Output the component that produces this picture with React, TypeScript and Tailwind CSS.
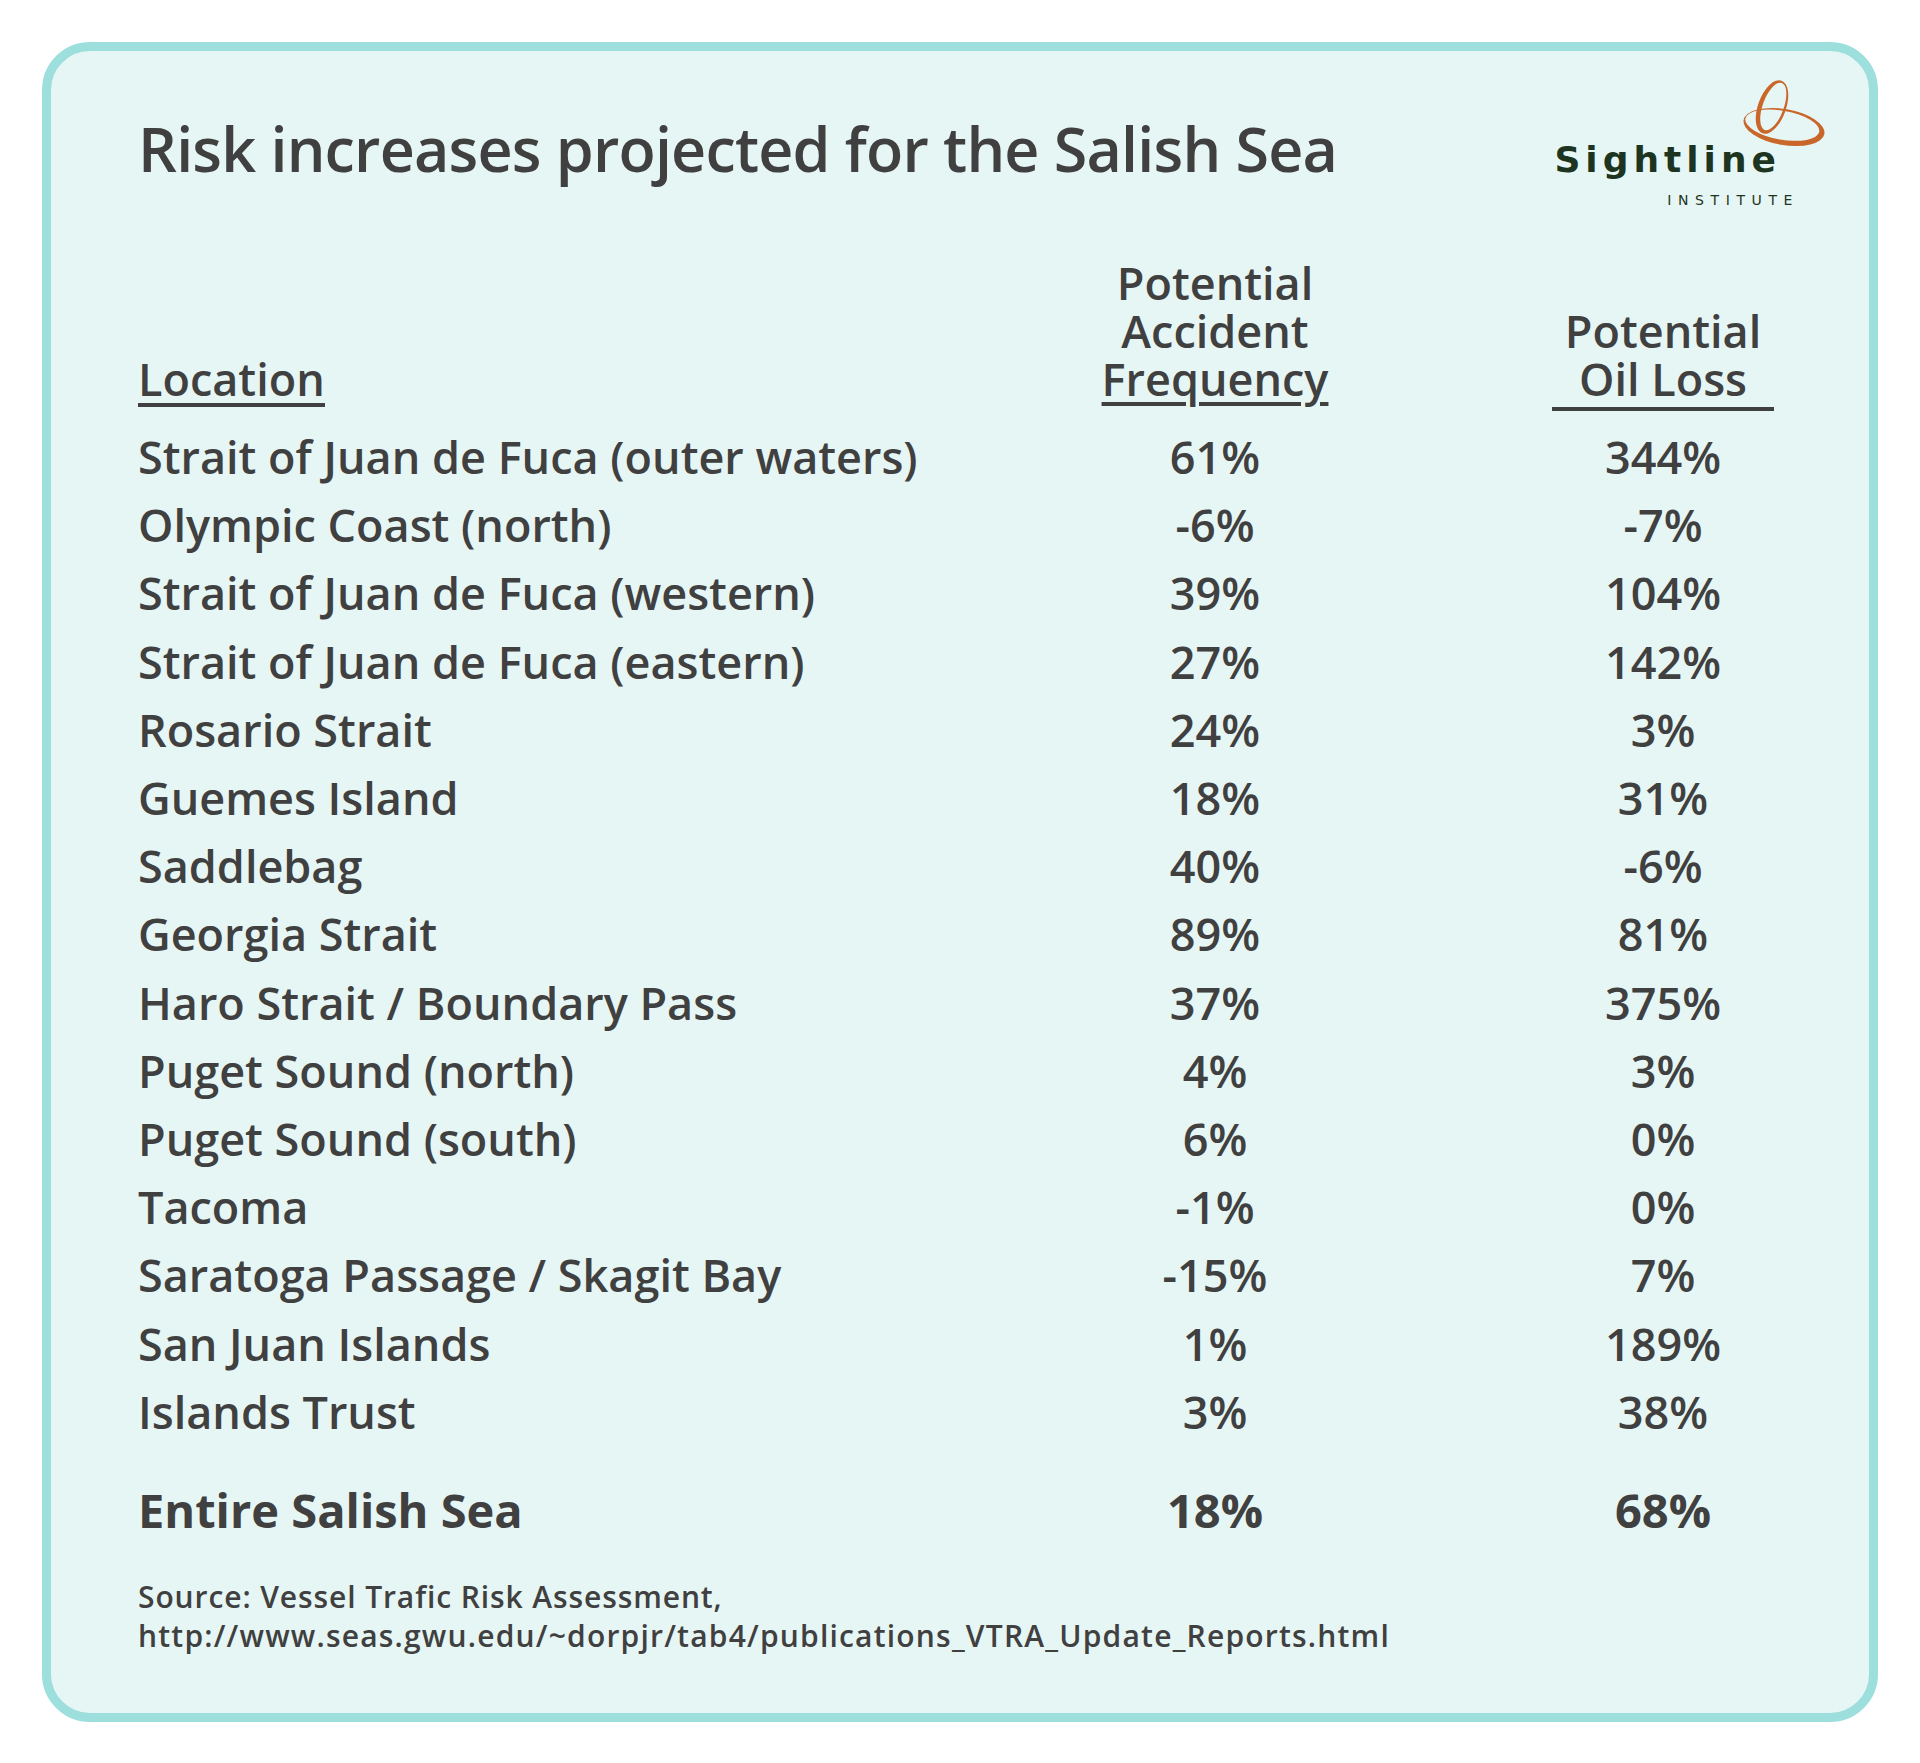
import React from 'react';

const rows: [string, string, string][] = [
  ['Strait of Juan de Fuca (outer waters)', '61%', '344%'],
  ['Olympic Coast (north)', '-6%', '-7%'],
  ['Strait of Juan de Fuca (western)', '39%', '104%'],
  ['Strait of Juan de Fuca (eastern)', '27%', '142%'],
  ['Rosario Strait', '24%', '3%'],
  ['Guemes Island', '18%', '31%'],
  ['Saddlebag', '40%', '-6%'],
  ['Georgia Strait', '89%', '81%'],
  ['Haro Strait / Boundary Pass', '37%', '375%'],
  ['Puget Sound (north)', '4%', '3%'],
  ['Puget Sound (south)', '6%', '0%'],
  ['Tacoma', '-1%', '0%'],
  ['Saratoga Passage / Skagit Bay', '-15%', '7%'],
  ['San Juan Islands', '1%', '189%'],
  ['Islands Trust', '3%', '38%'],
];

const SightlineLogo: React.FC = () => (
  <div className="relative w-[290px] h-[132px] mt-[24px]">
    {/* knot mark */}
    <svg className="absolute right-0 top-0 w-[100px] h-[85px]" viewBox="0 0 100 85">
      <path
        fill="#c9672a"
        fillRule="evenodd"
        transform="rotate(10 50 52)"
        d="M9 52 A41 18 0 1 0 91 52 A41 18 0 1 0 9 52 Z M10.5 50.5 A37.5 14.5 0 1 0 85.5 50.5 A37.5 14.5 0 1 0 10.5 50.5 Z"
      />
      <path
        fill="#c9672a"
        fillRule="evenodd"
        transform="rotate(20 38 32)"
        d="M24 32 A14 28 0 1 0 52 32 A14 28 0 1 0 24 32 Z M28.5 31 A10.5 25 0 1 0 49.5 31 A10.5 25 0 1 0 28.5 31 Z"
      />
    </svg>
    <div className="flex flex-col items-end pt-[67px] pr-[53px]">
      <span className="font-['DejaVu_Sans',sans-serif] font-bold text-[36px] leading-none tracking-[5px] text-[#1d3520]">
        Sightline
      </span>
      <span className="mt-[15px] mr-[-18px] font-['DejaVu_Sans',sans-serif] text-[14px] leading-none tracking-[6.6px] text-[#1d3520]">
        INSTITUTE
      </span>
    </div>
  </div>
);

const cols = 'grid grid-cols-[749px_240px_240px] gap-x-[208px]';

export default function App() {
  return (
    <div className="w-full min-h-[1763px] bg-white p-[42px] font-['Open_Sans',sans-serif] text-[#404040]">
      <div className="h-[1680px] rounded-[48px] border-[9px] border-[#9ddfdd] bg-[#e6f6f5] pl-[87px] pr-[35px]">
        {/* Header */}
        <div className="flex justify-between items-start">
          <h1 className="mt-[67px] text-[61px] leading-none font-semibold tracking-[-0.8px]">
            Risk increases projected for the Salish Sea
          </h1>
          <SightlineLogo />
        </div>

        {/* Column headings */}
        <div className={`${cols} mt-[52px] items-end text-[45px] font-semibold leading-[48px]`}>
          <div className="justify-self-start border-b-4 border-[#404040] mb-[4px]">Location</div>
          <div className="text-center pb-[8px]">
            Potential
            <br />
            Accident
            <br />
            <span className="underline decoration-[4px] underline-offset-[6px]">Frequency</span>
          </div>
          <div className="text-center">
            <div className="inline-block border-b-4 border-[#404040] px-[13px] pb-[4px]">
              Potential
              <br />
              Oil Loss
            </div>
          </div>
        </div>

        {/* Rows */}
        <div className="mt-[12px] flex flex-col text-[45px] font-semibold leading-[68.2px]">
          {rows.map(([loc, freq, oil]) => (
            <div key={loc} className={cols}>
              <div className="whitespace-nowrap">{loc}</div>
              <div className="text-center">{freq}</div>
              <div className="text-center">{oil}</div>
            </div>
          ))}
        </div>

        {/* Total */}
        <div className={`${cols} mt-[30px] text-[47px] font-bold leading-[68px]`}>
          <div>Entire Salish Sea</div>
          <div className="text-center">18%</div>
          <div className="text-center">68%</div>
        </div>

        {/* Source */}
        <div className="mt-[33px] text-[30px] font-semibold leading-[39px]">
          <div className="tracking-[0.9px]">Source: Vessel Trafic Risk Assessment,</div>
          <div className="tracking-[1.2px]">http://www.seas.gwu.edu/~dorpjr/tab4/publications_VTRA_Update_Reports.html</div>
        </div>
      </div>
    </div>
  );
}
